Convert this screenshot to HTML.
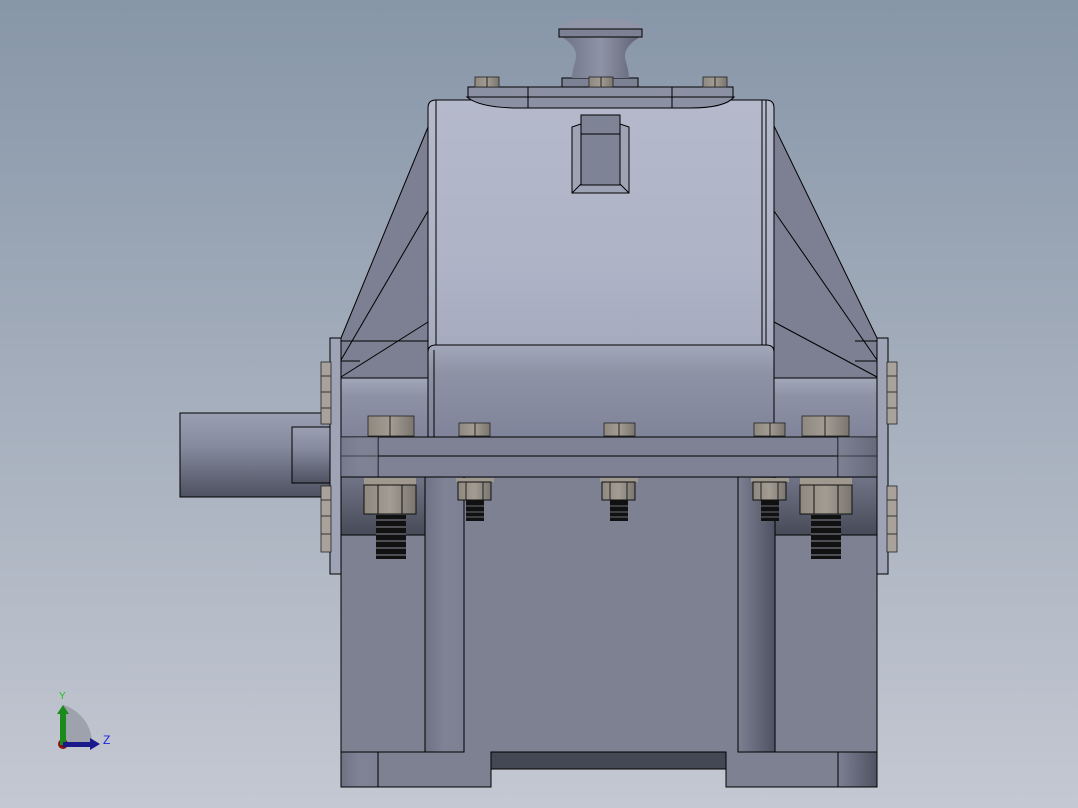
<!DOCTYPE html>
<html><head><meta charset="utf-8"><style>
html,body{margin:0;padding:0;width:1078px;height:808px;overflow:hidden}
svg{display:block}
text{font-family:"Liberation Sans",sans-serif}
</style></head><body>
<svg width="1078" height="808" viewBox="0 0 1078 808" xmlns="http://www.w3.org/2000/svg">
<defs>
<linearGradient id="bg" x1="0" y1="0" x2="0" y2="1"><stop offset="0" stop-color="#8796a8"/><stop offset="1" stop-color="#c4c8d2"/></linearGradient>
<linearGradient id="cylv" x1="0" y1="0" x2="0" y2="1"><stop offset="0" stop-color="#b4b9cb"/><stop offset="0.5" stop-color="#aeb3c6"/><stop offset="1" stop-color="#9ca1b5"/></linearGradient>
<linearGradient id="band" x1="0" y1="0" x2="0" y2="1"><stop offset="0" stop-color="#a2a7ba"/><stop offset="0.3" stop-color="#8d92a5"/><stop offset="1" stop-color="#80849a"/></linearGradient>
<linearGradient id="shaft" x1="0" y1="0" x2="0" y2="1"><stop offset="0" stop-color="#9a9fb2"/><stop offset="0.4" stop-color="#858a9e"/><stop offset="1" stop-color="#4d5160"/></linearGradient>
<linearGradient id="dark" x1="0" y1="0" x2="0" y2="1"><stop offset="0" stop-color="#707486"/><stop offset="1" stop-color="#474b58"/></linearGradient>
<linearGradient id="colL" x1="0" y1="0" x2="1" y2="0"><stop offset="0" stop-color="#6e7284"/><stop offset="0.5" stop-color="#7f8395"/><stop offset="1" stop-color="#7c8092"/></linearGradient>
<linearGradient id="colR" x1="0" y1="0" x2="1" y2="0"><stop offset="0" stop-color="#7c8092"/><stop offset="1" stop-color="#4e5262"/></linearGradient>
<linearGradient id="knob" x1="0" y1="0" x2="1" y2="0"><stop offset="0" stop-color="#6e7386"/><stop offset="0.5" stop-color="#8e93a6"/><stop offset="1" stop-color="#5e6274"/></linearGradient>
<linearGradient id="nut" x1="0" y1="0" x2="1" y2="0"><stop offset="0" stop-color="#8e887f"/><stop offset="0.5" stop-color="#a29c93"/><stop offset="1" stop-color="#7a756e"/></linearGradient>
</defs>
<rect width="1078" height="808" fill="url(#bg)"/>

<rect x="180" y="413" width="152" height="84" fill="url(#shaft)" stroke="#000" stroke-width="1"/>
<rect x="292" y="427" width="40" height="56" fill="url(#shaft)" stroke="#000" stroke-width="1"/>

<rect x="330" y="338" width="11" height="236" fill="#9ea3b6" stroke="#000" stroke-width="1"/>
<rect x="877" y="338" width="11" height="236" fill="#9ea3b6" stroke="#000" stroke-width="1"/>
<g fill="#a8a29a" stroke="#222" stroke-width="0.8">
<rect x="321" y="362" width="10" height="62"/><rect x="321" y="486" width="10" height="66"/>
<rect x="887" y="362" width="10" height="62"/><rect x="887" y="486" width="10" height="66"/>
</g>
<g stroke="#333" stroke-width="1">
<line x1="321" y1="376" x2="331" y2="376"/><line x1="321" y1="392" x2="331" y2="392"/><line x1="321" y1="408" x2="331" y2="408"/>
<line x1="321" y1="500" x2="331" y2="500"/><line x1="321" y1="516" x2="331" y2="516"/><line x1="321" y1="534" x2="331" y2="534"/>
<line x1="887" y1="376" x2="897" y2="376"/><line x1="887" y1="392" x2="897" y2="392"/><line x1="887" y1="408" x2="897" y2="408"/>
<line x1="887" y1="500" x2="897" y2="500"/><line x1="887" y1="516" x2="897" y2="516"/><line x1="887" y1="534" x2="897" y2="534"/>
</g>

<polygon points="428,127 341,338 341,378 428,378" fill="#7c8092" stroke="#000" stroke-width="1"/>
<polygon points="774,126 877,338 877,378 774,378" fill="#7c8092" stroke="#000" stroke-width="1"/>
<g stroke="#000" stroke-width="1" fill="none">
<line x1="428" y1="211" x2="341" y2="360"/><line x1="428" y1="322" x2="341" y2="377"/>
<line x1="774" y1="211" x2="877" y2="360"/><line x1="774" y1="322" x2="877" y2="377"/>
<line x1="341" y1="341" x2="428" y2="341"/><line x1="341" y1="361" x2="360" y2="361"/>
<line x1="877" y1="341" x2="855" y2="341"/><line x1="877" y1="361" x2="855" y2="361"/>
</g>
<rect x="341" y="378" width="87" height="59" fill="url(#band)" stroke="#000" stroke-width="1"/>
<rect x="774" y="378" width="103" height="59" fill="url(#band)" stroke="#000" stroke-width="1"/>

<path d="M428,437 L428,108 Q428,100 436,100 L766,100 Q774,100 774,108 L774,437 Z" fill="url(#cylv)" stroke="#000" stroke-width="1"/>
<line x1="436" y1="100" x2="436" y2="345" stroke="#000"/>
<line x1="762" y1="100" x2="762" y2="423" stroke="#000"/>
<line x1="766" y1="100" x2="766" y2="423" stroke="#000"/>
<path d="M428,437 L428,352 Q428,345 436,345 L766,345 Q774,345 774,352 L774,437" fill="url(#band)" stroke="#000" stroke-width="1"/>
<line x1="434" y1="350" x2="434" y2="437" stroke="#000"/>

<polygon points="572,127 581,124 620,124 629,127 629,193 572,193" fill="#9ea3b6" stroke="#000"/>
<rect x="581" y="115" width="39" height="70" fill="#7f8396" stroke="#000"/>
<line x1="581" y1="134" x2="620" y2="134" stroke="#000"/>
<line x1="572" y1="193" x2="581" y2="184" stroke="#000"/><line x1="629" y1="193" x2="620" y2="184" stroke="#000"/>

<path d="M467,97 Q480,108 520,108 L690,108 Q725,108 734,97 Z" fill="#8c90a3" stroke="#000"/>
<rect x="468" y="87" width="265" height="10" fill="#8c90a3" stroke="#000"/>
<line x1="528" y1="87" x2="528" y2="108" stroke="#000"/><line x1="672" y1="87" x2="672" y2="108" stroke="#000"/>
<rect x="562" y="78" width="76" height="9" fill="#7d8194" stroke="#000"/>
<path d="M562,37 Q580,48 575,62 Q572,72 572,78 L629,78 Q629,72 626,62 Q621,48 640,37 Z" fill="url(#knob)"/>
<path d="M559,29 Q562,19 600,18 Q638,19 642,29 Z" fill="#9095a8"/>
<rect x="559" y="29" width="83" height="8" fill="#7c8194" stroke="#000"/>
<g fill="url(#nut)" stroke="#222" stroke-width="0.8">
<rect x="475" y="77" width="24" height="10"/><rect x="589" y="77" width="24" height="10"/><rect x="703" y="77" width="24" height="10"/>
</g>
<g stroke="#222"><line x1="487" y1="77" x2="487" y2="87"/><line x1="601" y1="77" x2="601" y2="87"/><line x1="715" y1="77" x2="715" y2="87"/></g>

<rect x="341" y="437" width="536" height="40" fill="#7e8294" stroke="#000"/>
<line x1="341" y1="456" x2="877" y2="456" stroke="#000"/>
<line x1="378" y1="437" x2="378" y2="477" stroke="#000"/><line x1="838" y1="437" x2="838" y2="477" stroke="#000"/>
<rect x="341" y="437" width="37" height="40" fill="url(#colL)" opacity="0.5"/>
<rect x="838" y="437" width="39" height="40" fill="url(#colR)" opacity="0.5"/>

<g fill="url(#nut)" stroke="#222" stroke-width="0.8">
<rect x="368" y="416" width="46" height="20"/><rect x="459" y="423" width="31" height="13"/><rect x="604" y="423" width="31" height="13"/><rect x="754" y="423" width="31" height="13"/><rect x="802" y="416" width="47" height="20"/>
</g>
<g stroke="#222"><line x1="390" y1="416" x2="390" y2="436"/><line x1="475" y1="423" x2="475" y2="436"/><line x1="619" y1="423" x2="619" y2="436"/><line x1="770" y1="423" x2="770" y2="436"/><line x1="825" y1="416" x2="825" y2="436"/></g>

<path d="M341,477 L877,477 L877,787 L726,787 L726,752 L491,752 L491,787 L341,787 Z" fill="#7d8192" stroke="#000"/>
<rect x="341" y="477" width="84" height="58" fill="url(#dark)" stroke="#000"/>
<rect x="775" y="477" width="102" height="58" fill="url(#dark)" stroke="#000"/>
<rect x="425" y="477" width="39" height="275" fill="url(#colL)" stroke="#000"/>
<rect x="738" y="477" width="37" height="275" fill="url(#colR)" stroke="#000"/>
<line x1="341" y1="752" x2="464" y2="752" stroke="#000"/><line x1="738" y1="752" x2="877" y2="752" stroke="#000"/>
<rect x="341" y="752" width="37" height="35" fill="url(#colL)" stroke="#000"/>
<rect x="838" y="752" width="39" height="35" fill="url(#colR)" stroke="#000"/>
<rect x="491" y="752" width="235" height="17" fill="#444754" stroke="#000"/>

<g>
<rect x="364" y="478" width="52" height="7" fill="#9e988f"/>
<polygon points="364,485 416,485 416,514 364,514" fill="url(#nut)" stroke="#111"/>
<line x1="378" y1="485" x2="378" y2="514" stroke="#111"/><line x1="402" y1="485" x2="402" y2="514" stroke="#111"/>
<rect x="376" y="515" width="30" height="44" fill="#111"/>
<rect x="800" y="478" width="52" height="7" fill="#9e988f"/>
<polygon points="800,485 852,485 852,514 800,514" fill="url(#nut)" stroke="#111"/>
<line x1="814" y1="485" x2="814" y2="514" stroke="#111"/><line x1="838" y1="485" x2="838" y2="514" stroke="#111"/>
<rect x="811" y="515" width="30" height="44" fill="#111"/>
<g stroke="#8a8d98" stroke-width="1">
<line x1="376" y1="520" x2="406" y2="520"/><line x1="376" y1="527" x2="406" y2="527"/><line x1="376" y1="534" x2="406" y2="534"/><line x1="376" y1="541" x2="406" y2="541"/><line x1="376" y1="548" x2="406" y2="548"/><line x1="376" y1="555" x2="406" y2="555"/>
<line x1="811" y1="520" x2="841" y2="520"/><line x1="811" y1="527" x2="841" y2="527"/><line x1="811" y1="534" x2="841" y2="534"/><line x1="811" y1="541" x2="841" y2="541"/><line x1="811" y1="548" x2="841" y2="548"/><line x1="811" y1="555" x2="841" y2="555"/>
</g>
<rect x="456" y="478" width="38" height="4" fill="#9e988f"/><rect x="458" y="482" width="33" height="18" fill="url(#nut)" stroke="#111"/><rect x="466" y="500" width="18" height="21" fill="#111"/>
<rect x="600" y="478" width="38" height="4" fill="#9e988f"/><rect x="602" y="482" width="33" height="18" fill="url(#nut)" stroke="#111"/><rect x="610" y="500" width="18" height="21" fill="#111"/>
<rect x="751" y="478" width="38" height="4" fill="#9e988f"/><rect x="753" y="482" width="33" height="18" fill="url(#nut)" stroke="#111"/><rect x="761" y="500" width="18" height="21" fill="#111"/>
<g stroke="#6a6d78" stroke-width="1">
<line x1="466" y1="506" x2="484" y2="506"/><line x1="466" y1="512" x2="484" y2="512"/><line x1="466" y1="517" x2="484" y2="517"/>
<line x1="610" y1="506" x2="628" y2="506"/><line x1="610" y1="512" x2="628" y2="512"/><line x1="610" y1="517" x2="628" y2="517"/>
<line x1="761" y1="506" x2="779" y2="506"/><line x1="761" y1="512" x2="779" y2="512"/><line x1="761" y1="517" x2="779" y2="517"/>
</g>
<g stroke="#222"><line x1="466" y1="482" x2="466" y2="500"/><line x1="483" y1="482" x2="483" y2="500"/><line x1="610" y1="482" x2="610" y2="500"/><line x1="627" y1="482" x2="627" y2="500"/><line x1="761" y1="482" x2="761" y2="500"/><line x1="778" y1="482" x2="778" y2="500"/></g>
</g>

<path d="M63,745 L63,705 A40,40 0 0 1 92,745 Z" fill="#9da2ad"/>
<circle cx="63" cy="744" r="5" fill="#8a1010"/>
<rect x="60" y="713" width="6" height="32" fill="#1a8a1a"/>
<polygon points="57,714 63,705 69,714" fill="#1a8a1a"/>
<rect x="63" y="742" width="28" height="5" fill="#1a1a8a"/>
<polygon points="90,738 100,744 90,750" fill="#1a1a8a"/>
<text x="59" y="699" font-size="10" fill="#20c020">Y</text>
<text x="103" y="744" font-size="12" fill="#2020e0">Z</text>
</svg>
</body></html>
